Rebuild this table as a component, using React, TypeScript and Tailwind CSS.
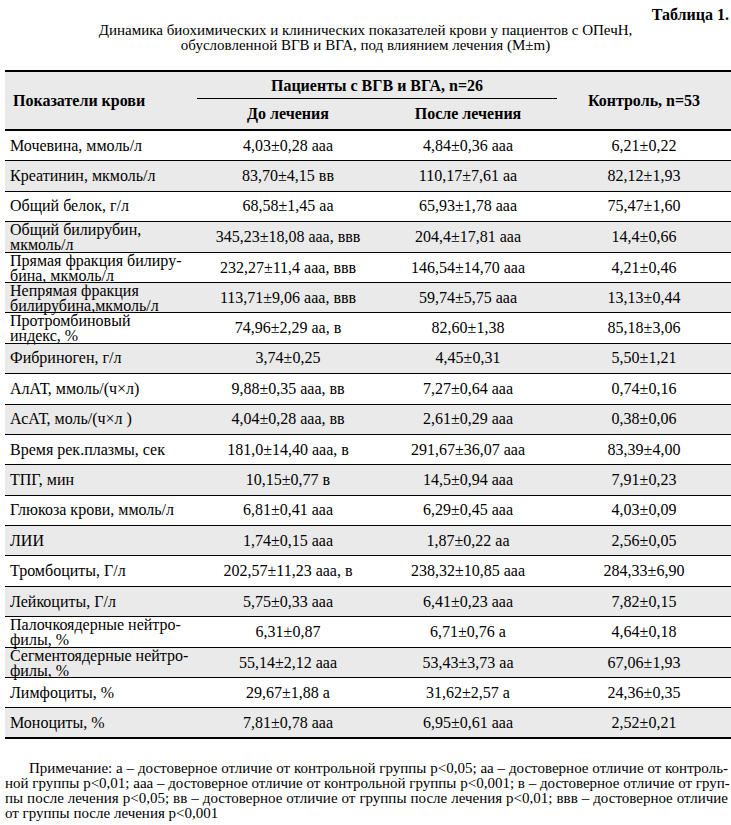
import React from "react";

type Row = { name: React.ReactNode; a: string; b: string; c: string; two?: boolean };

const rows: Row[] = [
  { name: "Мочевина, ммоль/л", a: "4,03±0,28 ааа", b: "4,84±0,36 ааа", c: "6,21±0,22" },
  { name: "Креатинин, мкмоль/л", a: "83,70±4,15 вв", b: "110,17±7,61 аа", c: "82,12±1,93" },
  { name: "Общий белок, г/л", a: "68,58±1,45 аа", b: "65,93±1,78 ааа", c: "75,47±1,60" },
  { name: <>Общий билирубин,<br />мкмоль/л</>, a: "345,23±18,08 ааа, ввв", b: "204,4±17,81 ааа", c: "14,4±0,66", two: true },
  { name: <>Прямая фракция билиру-<br />бина, мкмоль/л</>, a: "232,27±11,4 ааа, ввв", b: "146,54±14,70 ааа", c: "4,21±0,46", two: true },
  { name: <>Непрямая фракция<br />билирубина,мкмоль/л</>, a: "113,71±9,06 ааа, ввв", b: "59,74±5,75 ааа", c: "13,13±0,44", two: true },
  { name: <>Протромбиновый<br />индекс, %</>, a: "74,96±2,29 аа, в", b: "82,60±1,38", c: "85,18±3,06", two: true },
  { name: "Фибриноген, г/л", a: "3,74±0,25", b: "4,45±0,31", c: "5,50±1,21" },
  { name: "АлАТ, ммоль/(ч×л)", a: "9,88±0,35 ааа, вв", b: "7,27±0,64 ааа", c: "0,74±0,16" },
  { name: "АсАТ, моль/(ч×л )", a: "4,04±0,28 ааа, вв", b: "2,61±0,29 ааа", c: "0,38±0,06" },
  { name: "Время рек.плазмы, сек", a: "181,0±14,40 ааа, в", b: "291,67±36,07 ааа", c: "83,39±4,00" },
  { name: "ТПГ, мин", a: "10,15±0,77 в", b: "14,5±0,94 ааа", c: "7,91±0,23" },
  { name: "Глюкоза крови, ммоль/л", a: "6,81±0,41 ааа", b: "6,29±0,45 ааа", c: "4,03±0,09" },
  { name: "ЛИИ", a: "1,74±0,15 ааа", b: "1,87±0,22 аа", c: "2,56±0,05" },
  { name: "Тромбоциты, Г/л", a: "202,57±11,23 ааа, в", b: "238,32±10,85 ааа", c: "284,33±6,90" },
  { name: "Лейкоциты, Г/л", a: "5,75±0,33 ааа", b: "6,41±0,23 ааа", c: "7,82±0,15" },
  { name: <>Палочкоядерные нейтро-<br />филы, %</>, a: "6,31±0,87", b: "6,71±0,76 а", c: "4,64±0,18", two: true },
  { name: <>Сегментоядерные нейтро-<br />филы, %</>, a: "55,14±2,12 ааа", b: "53,43±3,73 аа", c: "67,06±1,93", two: true },
  { name: "Лимфоциты, %", a: "29,67±1,88 а", b: "31,62±2,57 а", c: "24,36±0,35" },
  { name: "Моноциты, %", a: "7,81±0,78 ааа", b: "6,95±0,61 ааа", c: "2,52±0,21" },
];

const noteLines = [
  "Примечание: а – достоверное отличие от контрольной группы р<0,05; аа – достоверное отличие от контроль-",
  "ной группы р<0,01; ааа – достоверное отличие от контрольной группы р<0,001; в – достоверное отличие от груп-",
  "пы после лечения р<0,05; вв – достоверное отличие от группы после лечения р<0,01; ввв – достоверное отличие",
];

export default function App() {
  return (
    <div className="w-[731px] min-h-[825px] bg-white text-black font-['Liberation_Serif',serif]">
      <div className="pt-[7px] pr-[2px] text-right text-[16px] font-bold leading-[16px]">Таблица 1.</div>
      <div className="text-center text-[15px] leading-[15px]">
        Динамика биохимических и клинических показателей крови у пациентов с ОПечН,
        <br />
        обусловленной ВГВ и ВГА, под влиянием лечения (М±m)
      </div>

      <div className="ml-[5px] mt-[17px] w-[726px]">
        <div className="grid grid-cols-[192px_182px_178px_174px] border-t-2 border-b-2 border-black bg-[#eaeaea] text-[16px] font-bold">
          <div className="row-span-2 flex items-center pl-[8px] h-[57px]">Показатели крови</div>
          <div className="col-span-2 flex h-[27px] items-center justify-center border-b border-black pt-[1px]">
            Пациенты с ВГВ и ВГА, n=26
          </div>
          <div className="row-span-2 flex items-center justify-center">Контроль, n=53</div>
          <div className="flex h-[30px] items-center justify-center">До лечения</div>
          <div className="flex h-[30px] items-center justify-center">После лечения</div>
        </div>

        {rows.map((r, i) => (
          <div
            key={i}
            className={
              "grid h-[30.4px] grid-cols-[192px_182px_178px_174px] text-[16px] " +
              (i % 2 === 1 ? "bg-[#eaeaea] " : "bg-white ") +
              (i === rows.length - 1 ? "border-b-2 border-black" : "border-b border-black")
            }
          >
            <div className={"flex items-center pl-[5px] " + (r.two ? "leading-[15px]" : "leading-[16px]")}>
              <div>{r.name}</div>
            </div>
            <div className="flex items-center justify-center leading-[16px]">{r.a}</div>
            <div className="flex items-center justify-center leading-[16px]">{r.b}</div>
            <div className="flex items-center justify-center leading-[16px]">{r.c}</div>
          </div>
        ))}
      </div>

      <div className="mt-[22px] pl-[5px] pr-[3px] text-[15px] leading-[15px]">
        {noteLines.map((l, i) => (
          <div
            key={i}
            className={"whitespace-nowrap text-justify [text-align-last:justify] " + (i === 0 ? "pl-[24px]" : "")}
          >
            {l}
          </div>
        ))}
        <div>от группы после лечения р&lt;0,001</div>
      </div>
    </div>
  );
}
